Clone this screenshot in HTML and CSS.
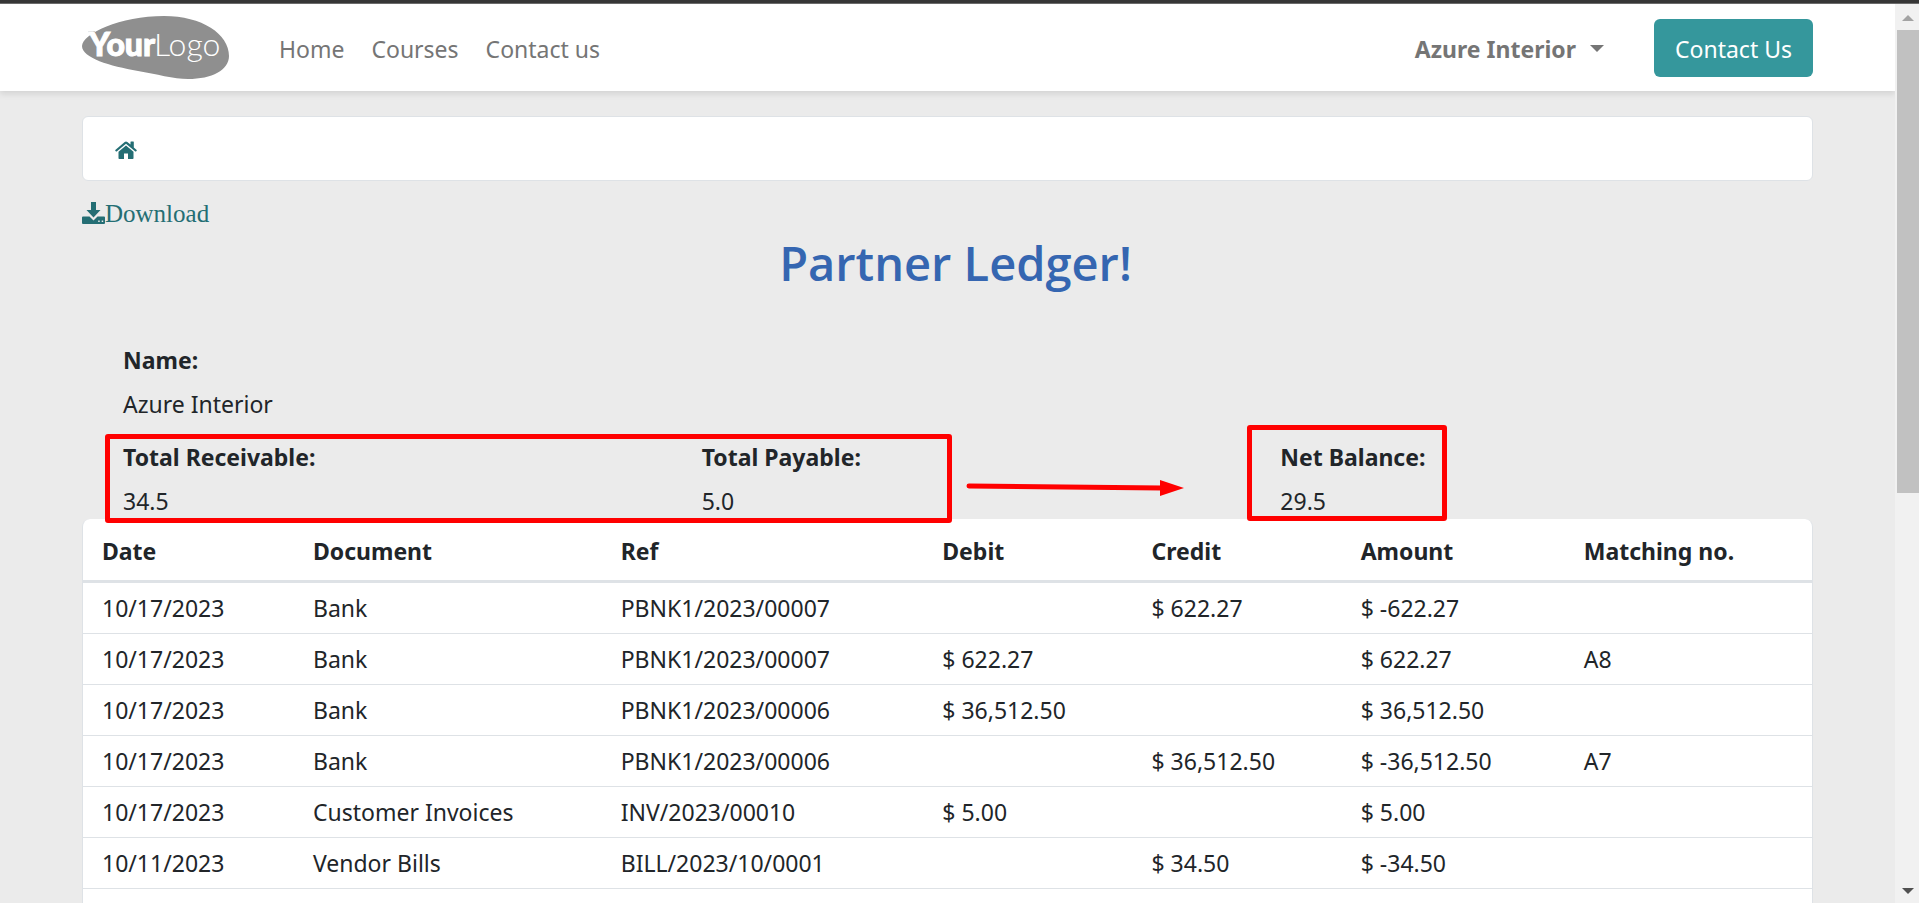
FILE: index.html
```html
<!DOCTYPE html>
<html lang="en">
<head>
<meta charset="utf-8">
<title>Partner Ledger</title>
<link rel="stylesheet" href="styles.css">
</head>
<body>
<div class="window-edge"></div>
<div class="viewport">
  <div class="page">
    <header class="header">
      <a class="logo" href="#" aria-label="Your Logo">
        <svg width="147" height="63" viewBox="0 0 147 63">
          <path d="M0 30C0 18 38 0 82 0C120 0 147 18 147 40C147 54 130 63 106 63C92 63 74 58 56 55C28 50 0 42 0 30Z" fill="#8f8f8f"/>
          <path d="M6 15.500H13L11 20Z" fill="#8f8f8f"/>
          <text class="logo-bold" x="7" y="40">Your</text>
          <text class="logo-light" x="72" y="40">Logo</text>
        </svg>
      </a>
      <nav class="nav">
        <a href="#">Home</a>
        <a href="#">Courses</a>
        <a href="#">Contact us</a>
      </nav>
      <button class="user" type="button">Azure Interior<span class="caret"></span></button>
      <a class="cta" href="#">Contact Us</a>
    </header>
    <main class="main">
      <nav class="breadcrumb" aria-label="Breadcrumb">
        <a href="#" aria-label="Home">
          <svg width="22" height="18" viewBox="0 0 22 18" fill="#246e74">
            <path d="M11 4.500L3.500 10.800V17.200Q3.500 18 4.300 18H9V12.600H13V18H17.700Q18.500 18 18.500 17.200V10.800Z"/>
            <path d="M21.700 8.900L18.800 6.400V1Q18.800 .5 18.300 .5H16Q15.500 .5 15.500 1V3.600L12.300 .9Q11 -.1 9.700 .9L.3 8.900Q0 9.200 .2 9.500L1 10.400Q1.300 10.600 1.700 10.400L11 2.700L20.300 10.400Q20.700 10.600 21 10.400L21.800 9.500Q22 9.200 21.700 8.900Z"/>
          </svg>
        </a>
      </nav>
      <a class="download" href="#">
        <svg width="23" height="22" viewBox="0 0 23 22" fill="#246e74">
          <path d="M9 0H14V8H18.500L11.500 15.500L4.500 8H9Z"/>
          <path fill-rule="evenodd" d="M1 14.500H7.500L11.500 18.500L15.500 14.500H22Q23 14.500 23 15.500V21Q23 22 22 22H1Q0 22 0 21V15.500Q0 14.500 1 14.500ZM16.200 18.500V20H17.700V18.500ZM19.700 18.500V20H21.200V18.500Z"/>
        </svg><span>Download</span></a>
      <h1 class="title">Partner Ledger!</h1>
      <section class="summary">
        <dl class="field"><dt>Name:</dt><dd>Azure Interior</dd></dl>
        <div class="totals">
          <dl class="field"><dt>Total Receivable:</dt><dd>34.5</dd></dl>
          <dl class="field"><dt>Total Payable:</dt><dd>5.0</dd></dl>
          <dl class="field"><dt>Net Balance:</dt><dd>29.5</dd></dl>
          <span class="mark mark-totals"></span>
          <svg class="mark-arrow" width="218" height="16" viewBox="0 0 218 16">
            <path d="M3 6L196 8" stroke="#f00" stroke-width="5" stroke-linecap="round"/>
            <path d="M194 0L218 8L194 16Z" fill="#f00"/>
          </svg>
          <span class="mark mark-net"></span>
        </div>
      </section>
      <div class="card">
        <table class="ledger">
          <colgroup><col class="c-date"><col class="c-doc"><col class="c-ref"><col class="c-debit"><col class="c-credit"><col class="c-amount"><col></colgroup>
          <thead>
            <tr><th scope="col">Date</th><th scope="col">Document</th><th scope="col">Ref</th><th scope="col">Debit</th><th scope="col">Credit</th><th scope="col">Amount</th><th scope="col">Matching no.</th></tr>
          </thead>
          <tbody>
            <tr><td>10/17/2023</td><td>Bank</td><td>PBNK1/2023/00007</td><td></td><td>$ 622.27</td><td>$ -622.27</td><td></td></tr>
            <tr><td>10/17/2023</td><td>Bank</td><td>PBNK1/2023/00007</td><td>$ 622.27</td><td></td><td>$ 622.27</td><td>A8</td></tr>
            <tr><td>10/17/2023</td><td>Bank</td><td>PBNK1/2023/00006</td><td>$ 36,512.50</td><td></td><td>$ 36,512.50</td><td></td></tr>
            <tr><td>10/17/2023</td><td>Bank</td><td>PBNK1/2023/00006</td><td></td><td>$ 36,512.50</td><td>$ -36,512.50</td><td>A7</td></tr>
            <tr><td>10/17/2023</td><td>Customer Invoices</td><td>INV/2023/00010</td><td>$ 5.00</td><td></td><td>$ 5.00</td><td></td></tr>
            <tr><td>10/11/2023</td><td>Vendor Bills</td><td>BILL/2023/10/0001</td><td></td><td>$ 34.50</td><td>$ -34.50</td><td></td></tr>
          </tbody>
        </table>
      </div>
    </main>
  </div>
  <div class="scrollbar" aria-hidden="true">
    <span class="arrow-up"></span>
    <span class="track"><span class="thumb"></span></span>
    <span class="arrow-down"></span>
  </div>
</div>
</body>
</html>
```
FILE: styles.css
```css
* { box-sizing: border-box; }

body {
  margin: 0;
  height: 100vh;
  display: flex;
  flex-direction: column;
  overflow: hidden;
  background: #ebebeb;
  color: #212529;
  font: 23px/36px "Noto Sans", "Open Sans", sans-serif;
}

a { text-decoration: none; color: #246e74; }

.window-edge {
  flex: none;
  height: 4px;
  background: #363636;
  border-bottom: 1px solid #6b6b6b;
}

.viewport { flex: 1; min-height: 0; display: flex; }

.page {
  flex: 1;
  min-width: 0;
  display: flex;
  flex-direction: column;
  overflow: hidden;
}

.header {
  flex: none;
  height: 87px;
  display: flex;
  align-items: center;
  padding: 0 82px;
  background: #fff;
  box-shadow: 0 3px 6px rgba(0, 0, 0, 0.1);
}

.logo { display: flex; margin-right: 50px; }
.logo-bold, .logo-light { font-family: Lato, sans-serif; font-size: 32px; fill: #fff; }
.logo-bold { font-weight: 900; stroke: #fff; stroke-width: 1px; }
.logo-light { font-weight: 300; }

.nav { display: flex; gap: 27px; padding-top: 2px; }
.nav a { color: #757575; }

.user {
  margin-left: auto;
  margin-right: 50px;
  padding: 2px 0 0;
  border: 0;
  background: none;
  display: flex;
  align-items: center;
  gap: 14px;
  font: inherit;
  font-weight: 700;
  color: #757575;
}

.caret {
  border: 7px solid transparent;
  border-top-color: #757575;
  border-bottom: 0;
}

.cta {
  padding: 12px 21px 10px;
  border-radius: 6px;
  background: #35979c;
  color: #fff;
}

.main {
  flex: 1;
  min-height: 0;
  display: flex;
  flex-direction: column;
  padding: 25px 82px 0;
}

.breadcrumb {
  flex: none;
  display: flex;
  align-items: center;
  height: 65px;
  padding: 2px 32px 0;
  background: #fff;
  border: 1px solid #dee2e6;
  border-radius: 6px;
}

.breadcrumb a, .breadcrumb svg { display: block; }

.download {
  align-self: flex-start;
  display: flex;
  align-items: center;
  margin-top: 12px;
  font: 25px/36px "Liberation Serif", serif;
}

.download span { padding-top: 3px; }

.title {
  margin: 0;
  padding: 1px 0 0 16px;
  font-family: "Open Sans", sans-serif;
  font-size: 47px;
  font-weight: 600;
  line-height: 60px;
  text-align: center;
  color: #3566b1;
}

.summary { padding: 49px 0 0 41px; }

.field { margin: 0; }
.field dt { margin-bottom: 8px; font-weight: 700; }
.field dd { margin: 0; }

.totals {
  position: relative;
  display: grid;
  grid-template-columns: repeat(3, 1fr);
  margin: 17px -46px 0 0;
}

/* Highlight boxes and arrow over the totals */
.mark { position: absolute; border: 5px solid #f00; border-radius: 3px; }
.mark-totals { left: -18px; top: -5px; width: 847px; height: 89px; }
.mark-net { left: 1124px; top: -14px; width: 200px; height: 96px; }
.mark-arrow { position: absolute; left: 843px; top: 41px; }

.card {
  flex: 1;
  background: #fff;
  border: 1px solid #dee2e6;
  border-top: 0;
  border-bottom: 0;
  border-radius: 8px 8px 0 0;
}

.ledger { width: 100%; table-layout: fixed; border-collapse: collapse; }
.ledger th, .ledger td { padding: 7px 19px; text-align: left; white-space: nowrap; }
.ledger th { padding: 14px 19px 11px; font-weight: 700; border-bottom: 3px solid #dee2e6; }
.ledger td { border-bottom: 1px solid #dee2e6; }

.c-date { width: 12.2%; }
.c-doc { width: 17.8%; }
.c-ref { width: 18.6%; }
.c-debit, .c-credit { width: 12.1%; }
.c-amount { width: 12.9%; }

.scrollbar {
  flex: none;
  width: 24px;
  display: flex;
  flex-direction: column;
  align-items: center;
  padding: 11px 0 9px 2px;
  background: #f1f1f1;
}

.arrow-up, .arrow-down { border: 6px solid transparent; }
.arrow-up { border-top: 0; border-bottom-color: #a3a3a3; }
.arrow-down { border-bottom: 0; border-top-color: #505050; }
.track { flex: 1; width: 100%; margin: 9px 0; }
.thumb { display: block; height: 54.5%; background: #c1c1c1; }
```
